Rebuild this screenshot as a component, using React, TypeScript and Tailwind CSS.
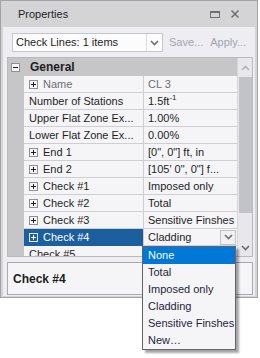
import React from "react";

const ExpandBox: React.FC<{ light?: boolean; minus?: boolean }> = ({ light, minus }) => (
    <svg width="9" height="9" viewBox="0 0 9 9" className="shrink-0">
        <rect x="0.5" y="0.5" width="8" height="8" fill={light ? "#1b5f9f" : "#f7f7f9"} stroke={light ? "#e8e8ec" : "#8f8f96"} />
        <line x1="2" y1="4.5" x2="7" y2="4.5" stroke={light ? "#ffffff" : "#1e1e1e"} />
        {!minus && <line x1="4.5" y1="2" x2="4.5" y2="7" stroke={light ? "#ffffff" : "#1e1e1e"} />}
    </svg>
);

const Chevron: React.FC<{ color?: string; up?: boolean }> = ({ color = "#717171", up }) => (
    <svg width="9" height="6" viewBox="0 0 9 6">
        <path d={up ? "M1 5 L4.5 1.5 L8 5" : "M1 1 L4.5 4.5 L8 1"} fill="none" stroke={color} strokeWidth="1.6" />
    </svg>
);

type Row = { name: string; value: React.ReactNode; box?: boolean; muted?: boolean };

const rows: Row[] = [
    { name: "Name", value: "CL 3", box: true, muted: true },
    { name: "Number of Stations", value: <span>1.5ft<sup className="text-[8px] top-[-0.6em]">-1</sup></span> },
    { name: "Upper Flat Zone Ex...", value: "1.00%" },
    { name: "Lower Flat Zone Ex...", value: "0.00%" },
    { name: "End 1", value: "[0\", 0\"] ft, in", box: true },
    { name: "End 2", value: "[105' 0\", 0\"] f...", box: true },
    { name: "Check #1", value: "Imposed only", box: true },
    { name: "Check #2", value: "Total", box: true },
    { name: "Check #3", value: "Sensitive Finshes", box: true },
];

const options = ["None", "Total", "Imposed only", "Cladding", "Sensitive Finshes", "New…"];

export default function App() {
    return (
        <div className="relative w-[260px] h-[358px] bg-white text-[11px] text-[#1e1e1e] font-['Liberation_Sans',Arial,sans-serif] leading-none">
            <div className="w-[258px] h-[298px] flex flex-col bg-[#d4d4d6] border border-[#a2a2a6] px-[2px] pb-[1px]">
                {/* title bar */}
                <div className="h-[26px] shrink-0 flex items-center pl-[15px] pr-[16px]">
                    <span className="text-[11px] text-[#1e1e1e]">Properties</span>
                    <div className="ml-auto flex items-center gap-[11px]">
                        <div className="w-[10px] h-[7px] border border-[#6f6f73] border-t-2" />
                        <svg width="8" height="8" viewBox="0 0 8 8">
                            <path d="M0.5 0.5 L7.5 7.5 M7.5 0.5 L0.5 7.5" stroke="#6f6f73" strokeWidth="1.5" />
                        </svg>
                    </div>
                </div>

                <div className="flex-1 flex flex-col bg-[#eeeef2] pl-[4px] pr-[2px] pb-[1px]">
                    {/* toolbar */}
                    <div className="h-[30px] shrink-0 flex items-start pt-[6px] pl-[5px]">
                        <div className="w-[151px] h-[19px] flex items-center bg-[#fcfcfc] border border-[#c6c6cc]">
                            <span className="pl-[3px] flex-1 text-[#1e1e1e]">Check Lines: 1 items</span>
                            <div className="w-[16px] h-full border-l border-[#dcdce0] flex items-center justify-center">
                                <Chevron />
                            </div>
                        </div>
                        <span className="ml-[6px] mt-[4px] text-[#a3a3b3]">Save...</span>
                        <span className="ml-[7px] mt-[4px] text-[#a3a3b3]">Apply...</span>
                    </div>

                    {/* property grid */}
                    <div className="h-[200px] shrink-0 flex border border-[#b9b9be] bg-[#f5f5f7] overflow-hidden">
                        <div className="w-[229px] flex flex-col overflow-hidden">
                            <div className="h-[18px] shrink-0 flex items-center bg-[#c6c6c8] pl-[3px]">
                                <ExpandBox minus />
                                <span className="ml-[10px] font-bold text-[12px] text-[#1e1e1e]">General</span>
                            </div>
                            {rows.map((r) => (
                                <div key={r.name} className="h-[17px] shrink-0 flex">
                                    <div className="w-[16px] bg-[#c6c6c8]" />
                                    <div className="w-[120px] flex items-center border-b border-r border-[#cfcfd3] pl-[5px]">
                                        {r.box && <ExpandBox />}
                                        <span className={(r.box ? "ml-[5px] " : "") + (r.muted ? "text-[#6d6d76]" : "")}>{r.name}</span>
                                    </div>
                                    <div className={"flex-1 flex items-center border-b border-[#cfcfd3] pl-[4px] whitespace-nowrap " + (r.muted ? "text-[#6d6d76]" : "")}>
                                        {r.value}
                                    </div>
                                </div>
                            ))}
                            {/* selected row */}
                            <div className="h-[17px] shrink-0 flex">
                                <div className="w-[16px] bg-[#c6c6c8]" />
                                <div className="w-[120px] flex items-center bg-[#1b5f9f] text-white border-r border-[#cfcfd3] pl-[5px]">
                                    <ExpandBox light />
                                    <span className="ml-[5px]">Check #4</span>
                                </div>
                                <div className="flex-1 flex items-center pl-[4px] pr-[1px] border-b border-[#cfcfd3]">
                                    <span>Cladding</span>
                                    <div className="ml-auto w-[16px] h-[15px] flex items-center justify-center bg-[#f0f0f2] border border-[#c4c4c8]">
                                        <Chevron />
                                    </div>
                                </div>
                            </div>
                            <div className="h-[17px] shrink-0 flex">
                                <div className="w-[16px] bg-[#c6c6c8]" />
                                <div className="w-[120px] flex items-center border-r border-[#cfcfd3] pl-[5px]">
                                    <span>Check #5</span>
                                </div>
                                <div className="flex-1" />
                            </div>
                        </div>
                        {/* scrollbar */}
                        <div className="w-[15px] flex flex-col items-center bg-[#e8e8ec] border-l border-[#d6d6da]">
                            <div className="h-[19px] flex items-center justify-center">
                                <Chevron up color="#b2b2b8" />
                            </div>
                            <div className="w-[13px] h-[136px] bg-[#c2c3c9]" />
                            <div className="flex-1" />
                            <div className="h-[17px] flex items-center justify-center">
                                <Chevron color="#6a6a70" />
                            </div>
                        </div>
                    </div>

                    {/* description */}
                    <div className="mt-[5px] h-[33px] shrink-0 border border-[#a9a9ae] bg-[#f5f5f7] flex items-center pl-[5px]">
                        <span className="font-bold text-[12px] text-[#1e1e1e]">Check #4</span>
                    </div>
                </div>
            </div>

            {/* dropdown list */}
            <div className="absolute left-[142px] top-[246px] w-[94px] bg-[#f5f5f7] border border-[#646468] shadow-[3px_3px_2px_rgba(0,0,0,0.35)]">
                {options.map((o, i) => (
                    <div
                        key={o}
                        className={"h-[17px] flex items-center pl-[5px] " + (i === 0 ? "bg-[#0078d7] text-white" : "text-[#1e1e3c]")}
                    >
                        {o}
                    </div>
                ))}
            </div>
        </div>
    );
}
